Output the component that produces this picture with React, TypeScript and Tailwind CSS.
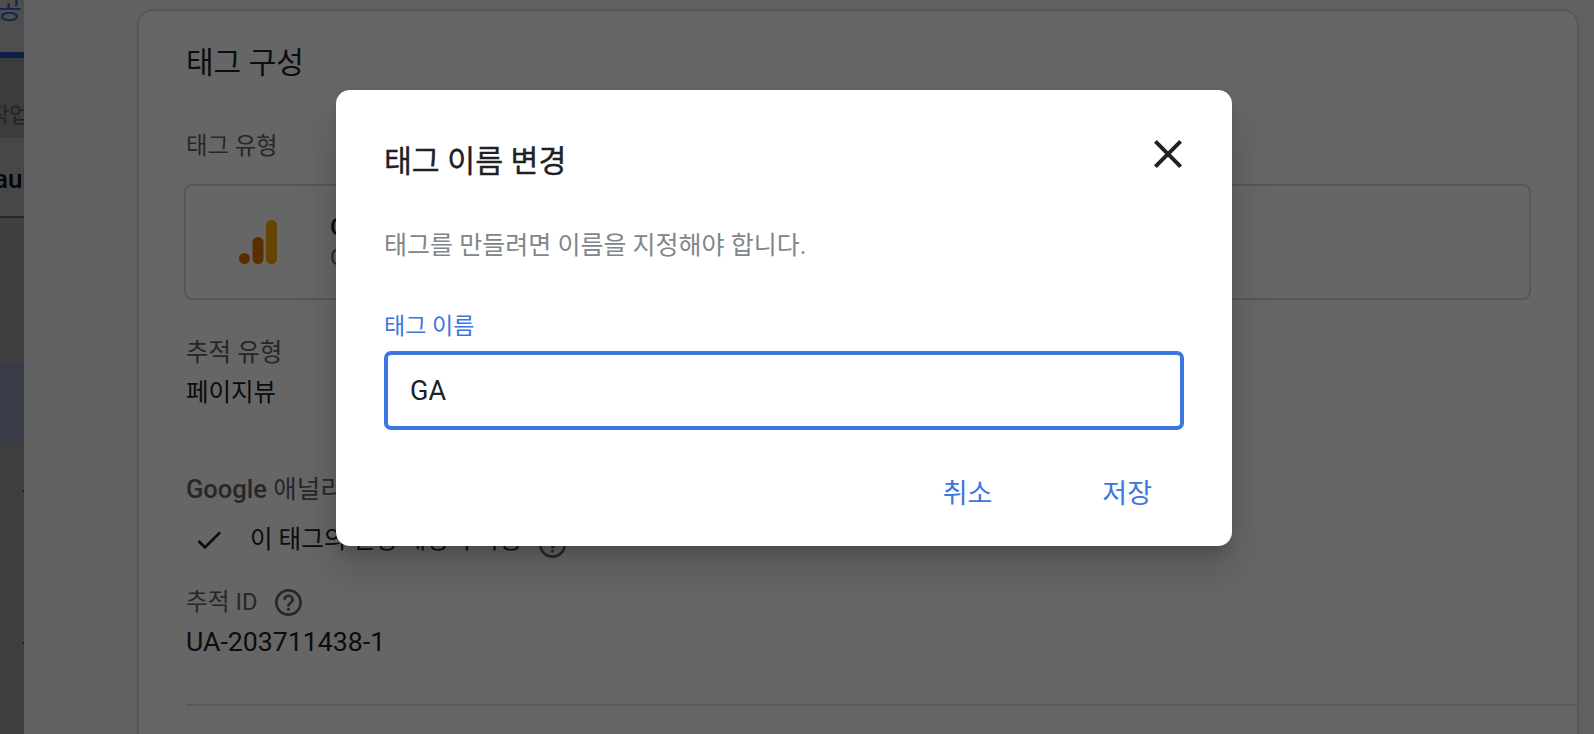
const FONT = "font-['Roboto','Noto_Sans_CJK_KR',sans-serif]";

function HelpIcon({ className }: { className: string }) {
  return (
    <svg viewBox="2 2 20 20" className={className} fill="currentColor">
      <path d="M11 18h2v-2h-2v2zm1-16C6.48 2 2 6.48 2 12s4.48 10 10 10 10-4.48 10-10S17.52 2 12 2zm0 18c-4.41 0-8-3.59-8-8s3.59-8 8-8 8 3.59 8 8-3.59 8-8 8zm0-14c-2.21 0-4 1.79-4 4h2c0-1.1.9-2 2-2s2 .9 2 2c0 2-3 1.75-3 5h2c0-2.25 3-2.5 3-5 0-2.21-1.79-4-4-4z" />
    </svg>
  );
}

function LeftDrawer() {
  return (
    <aside className="w-[24px] shrink-0 h-full overflow-hidden flex flex-col bg-[#9b9b9b]">
      <div className="h-[52px] shrink-0 bg-[#c4c4c4] overflow-hidden">
        <span className="block mt-[-6px] ml-[-3px] text-[27px] leading-[32px] text-[#2f5fc8] whitespace-nowrap">공</span>
      </div>
      <div className="h-[6px] shrink-0 bg-[#2a4fb5]" />
      <div className="h-[80px] shrink-0 bg-[#969696] overflow-hidden flex items-end pb-[11px]">
        <span className="ml-[-10px] text-[21px] leading-[24px] text-[#5a5a5a] whitespace-nowrap">작업</span>
      </div>
      <div className="h-[80px] shrink-0 bg-[#b2b2b2] overflow-hidden flex items-center justify-end pt-[3px] border-b-2 border-[#666]">
        <span className="mr-[-5px] text-[26px] leading-[28px] font-medium text-[#111] whitespace-nowrap">aul</span>
      </div>
      <div className="h-[144px] shrink-0 bg-[#a0a0a0]" />
      <div className="h-[80px] shrink-0 bg-[#9199b2]" />
      <div className="flex-1 flex flex-col items-end pt-[48px] gap-[150px]">
        <span className="w-[1px] h-[2px] bg-[#333]" />
        <span className="w-[1px] h-[2px] bg-[#333]" />
      </div>
    </aside>
  );
}

function TagConfigCard() {
  return (
    <section className="bg-white border-2 border-[#d8dadd] rounded-[16px] pl-[47px] pr-[46px] pt-[28px] h-[760px]">
      <h2 className="text-[30px] leading-[48px] text-[#202124] m-0">태그 구성</h2>
      <div className="mt-[43px] text-[23.3px] leading-[32px] text-[#5f6368]">태그 유형</div>
      <div className="mt-[22px] h-[116px] border-2 border-[#d8dadd] rounded-[8px] flex items-center ml-[-2px]">
        <svg viewBox="0 0 38 44" className="w-[38px] h-[44px] ml-[53px] shrink-0">
          <rect x="27" y="0" width="11" height="44" rx="5.5" fill="#f9ab00" />
          <rect x="13.5" y="17" width="11" height="27" rx="5.5" fill="#e37400" />
          <circle cx="5.5" cy="38.5" r="5.5" fill="#e37400" />
        </svg>
        <div className="ml-[53px] whitespace-nowrap">
          <div className="text-[24px] leading-[32px] font-medium text-[#202124]">Google 애널리틱스: 유니버설 애널리틱스</div>
          <div className="text-[22px] leading-[30px] text-[#5f6368]">Google 마케팅 플랫폼</div>
        </div>
      </div>
      <div className="mt-[37px] text-[24.5px] leading-[32px] text-[#5f6368]">추적 유형</div>
      <div className="mt-[8px] text-[24.5px] leading-[32px] text-[#202124]">페이지뷰</div>
      <div className="mt-[64px] text-[25.5px] leading-[32px] text-[#5f6368]"><span className="font-medium">Google</span> 애널리틱스 설정</div>
      <div className="mt-[19px] flex items-center h-[32px]">
        <svg viewBox="0 0 24 24" className="w-[32px] h-[32px] ml-[7px] shrink-0 text-[#202124]" fill="currentColor">
          <path d="M9 16.17L4.83 12l-1.42 1.41L9 19 21 7l-1.41-1.41z" />
        </svg>
        <span className="ml-[25px] text-[24.5px] leading-[32px] text-[#202124] whitespace-nowrap">이 태그의 설정 재정의 사용</span>
        <HelpIcon className="ml-[17px] mt-[8px] w-[27px] h-[27px] text-[#5f6368]" />
      </div>
      <div className="mt-[30px] flex items-center h-[32px]">
        <span className="text-[23.7px] leading-[32px] text-[#5f6368]">추적 ID</span>
        <HelpIcon className="ml-[18px] w-[27px] h-[27px] text-[#5f6368]" />
      </div>
      <div className="mt-[8px] text-[26.7px] leading-[32px] text-[#202124]">UA-203711438-1</div>
      <div className="mt-[46px] h-[2px] bg-[#e0e0e0] mr-[-46px]" />
    </section>
  );
}

function RenameDialog() {
  return (
    <div className="absolute left-[336px] top-[90px] w-[896px] h-[456px] bg-white rounded-[14px] shadow-[0_11px_15px_-7px_rgba(0,0,0,0.2),0_24px_38px_3px_rgba(0,0,0,0.14)] px-[48px] pt-[48px]">
      <div className="flex items-start justify-between">
        <h1 className="text-[30.3px] leading-[48px] font-normal [-webkit-text-stroke:0.35px_#202124] text-[#202124] m-0">태그 이름 변경</h1>
        <button className="mr-[-6px] mt-[-6px] w-[44px] h-[44px] flex items-center justify-center text-[#202124]">
          <svg viewBox="5 5 14 14" className="w-[28px] h-[28px]" fill="currentColor">
            <path d="M19 6.41L17.59 5 12 10.59 6.41 5 5 6.41 10.59 12 5 17.59 6.41 19 12 13.41 17.59 19 19 17.59 13.41 12z" />
          </svg>
        </button>
      </div>
      <p className="mt-[42px] m-0 text-[25px] leading-[36px] text-[#80868b]">태그를 만들려면 이름을 지정해야 합니다.</p>
      <label className="block mt-[47px] text-[23px] leading-[32px] text-[#3c76e0]">태그 이름</label>
      <div className="mt-[8px] h-[79px] border-[4px] border-[#3c76e0] rounded-[7px] flex items-center pt-[2px] px-[22px] text-[27px] text-[#202124]">GA</div>
      <div className="mt-[42px] flex justify-end pr-[32px] gap-[110px]">
        <button className="text-[27px] leading-[44px] text-[#3c76e0]">취소</button>
        <button className="text-[27px] leading-[44px] text-[#3c76e0]">저장</button>
      </div>
    </div>
  );
}

export default function App() {
  return (
    <div className={`relative w-full h-screen overflow-hidden flex bg-[#f1f3f4] ${FONT}`}>
      <LeftDrawer />
      <main className="flex-1 min-w-0 pl-[113px] pr-[15px] pt-[9px]">
        <TagConfigCard />
      </main>
      <div className="absolute inset-0 bg-black/60" />
      <RenameDialog />
    </div>
  );
}
